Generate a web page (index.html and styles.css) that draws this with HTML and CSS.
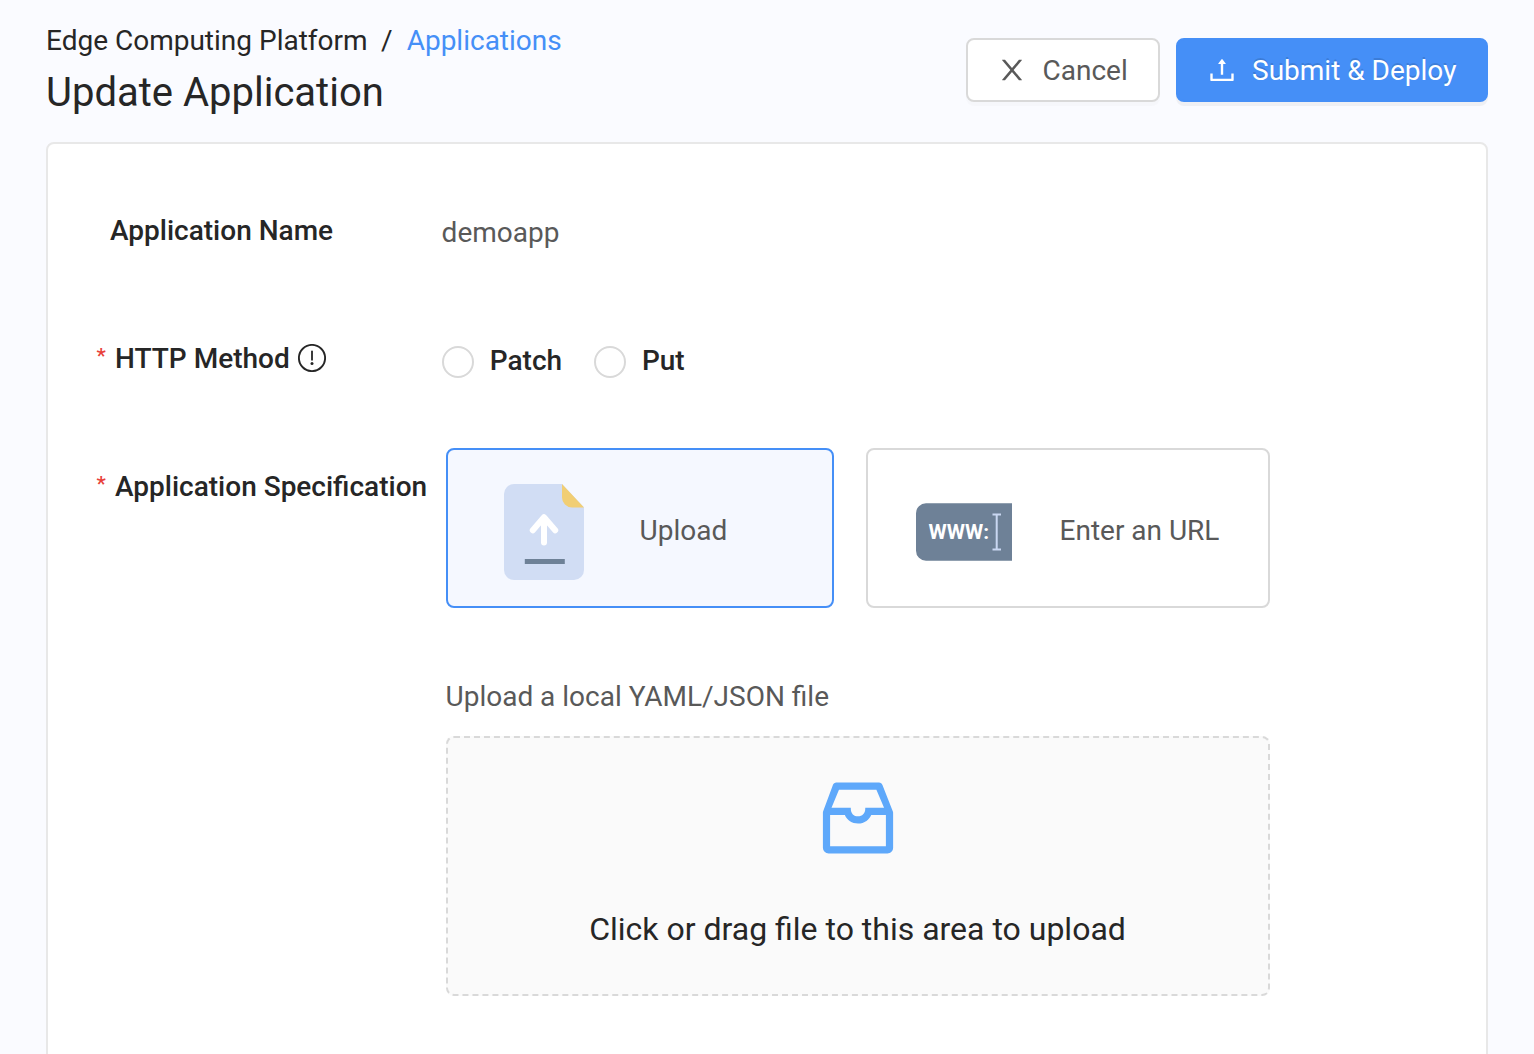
FILE: index.html
```html
<!DOCTYPE html>
<html lang="en">
<head>
<meta charset="utf-8">
<title>Update Application</title>
<link rel="stylesheet" href="styles.css">
</head>
<body>
<header class="header">
  <div class="heading">
    <nav class="breadcrumb"><span>Edge Computing Platform</span><span class="slash">/</span><a class="crumb-link">Applications</a></nav>
    <h1 class="title">Update Application</h1>
  </div>
  <div class="actions">
    <button class="btn btn-cancel"><svg class="btn-icon" viewBox="0 0 1024 1024"><path d="M563.8 512l262.5-312.9c4.4-5.2.7-13.1-6.1-13.1h-79.8c-4.7 0-9.2 2.1-12.3 5.7L511.6 449.8 295.1 191.7c-3-3.6-7.5-5.7-12.3-5.7H203c-6.8 0-10.5 7.9-6.1 13.1L459.4 512 196.9 824.9A7.95 7.95 0 0 0 203 838h79.8c4.7 0 9.2-2.1 12.3-5.7l216.5-258.1 216.5 258.1c3 3.6 7.5 5.7 12.3 5.7h79.8c6.8 0 10.5-7.9 6.1-13.1L563.8 512z"/></svg><span>Cancel</span></button>
    <button class="btn btn-primary"><svg class="btn-icon" viewBox="0 0 1024 1024"><path d="M400 317.7h73.9V656c0 4.4 3.6 8 8 8h60c4.4 0 8-3.6 8-8V317.7H624c6.7 0 10.4-7.7 6.3-12.9L518.3 163a8 8 0 0 0-12.6 0l-112 141.7c-4.1 5.3-.4 13 6.3 13zM878 626h-60c-4.4 0-8 3.6-8 8v154H214V634c0-4.4-3.6-8-8-8h-60c-4.4 0-8 3.6-8 8v198c0 17.7 14.3 32 32 32h684c17.7 0 32-14.3 32-32V634c0-4.4-3.6-8-8-8z"/></svg><span>Submit &amp; Deploy</span></button>
  </div>
</header>
<main class="card">
  <div class="row">
    <div class="label label-plain">Application Name</div>
    <div class="value">demoapp</div>
  </div>
  <div class="row">
    <div class="label"><span class="required">*</span>HTTP Method
      <svg class="info" viewBox="0 0 28 28"><circle cx="14" cy="14" r="13.1" fill="none" stroke="currentColor" stroke-width="1.9"/><rect x="13.1" y="6.7" width="1.8" height="9.8"/><circle cx="14" cy="19.4" r="1.5"/></svg>
    </div>
    <div class="radios">
      <label class="radio"><span class="dot"></span>Patch</label>
      <label class="radio"><span class="dot"></span>Put</label>
    </div>
  </div>
  <div class="row row-spec">
    <div class="label"><span class="required">*</span>Application Specification</div>
    <div class="spec">
      <div class="choices">
        <div class="choice choice-upload">
          <svg class="file-icon" viewBox="0 0 80 96">
            <path fill="#d1ddf4" d="M10 0H58L80 23.5V86a10 10 0 0 1-10 10H10A10 10 0 0 1 0 86V10A10 10 0 0 1 10 0z"/>
            <path fill="#f1ce74" d="M58 0L80 23.5H68a10 10 0 0 1-10-10z"/>
            <path fill="none" stroke="#fff" stroke-width="6" stroke-linecap="round" stroke-linejoin="round" d="M40 58.5V33.5M28.8 46.3L40 33.3L51.2 46.3"/>
            <path fill="#6e8197" d="M20.8 75h40v5h-40z"/>
          </svg>
          <span>Upload</span>
        </div>
        <div class="choice choice-url">
          <svg class="url-icon" viewBox="0 0 96 58">
            <path fill="#6e8197" d="M10 .2H96V57.8H10A10 10 0 0 1 0 47.8V10.2A10 10 0 0 1 10 .2z"/>
            <text x="12.5" y="35.8" class="url-text" textLength="60.5" lengthAdjust="spacingAndGlyphs">WWW:</text>
            <path fill="none" stroke="#c9d7f1" stroke-width="2" d="M76.5 11.5h8.5M80.7 11.5v35M76.5 46.5h8.5"/>
          </svg>
          <span>Enter an URL</span>
        </div>
      </div>
      <p class="hint">Upload a local YAML/JSON file</p>
      <div class="dropzone">
        <svg class="inbox" viewBox="0 0 1024 1024"><path d="M885.2 446.3l-.2-.8-112.2-285.1c-5-16.1-19.9-27.2-36.8-27.2H281.2c-17 0-32.1 11.3-36.9 27.6L139.4 443l-.3.7-.2.8c-1.3 4.9-1.7 9.9-1 14.8-.1 1.6-.2 3.2-.2 4.8V830a60.9 60.9 0 0 0 60.8 60.8h627.2c33.5 0 60.8-27.3 60.9-60.8V464.1c0-1.3 0-2.6-.1-3.7.4-4.9 0-9.6-1.3-14.1zm-295.8-43l-.3 15.7c-.8 44.9-31.8 75.1-77.1 75.1-22.1 0-41.1-7.1-54.8-20.6S436 441.2 435.6 419l-.3-15.7H229.5L309 210h399.2l81.7 193.3H589.4zm-375 76.8h157.3c24.3 57.1 76 90.8 140.4 90.8 33.7 0 65-9.4 90.3-27.2 22.2-15.6 39.5-37.4 50.7-63.6h156.5V814H214.4V480.1z"/></svg>
        <p class="drop-text">Click or drag file to this area to upload</p>
      </div>
    </div>
  </div>
</main>
</body>
</html>
```
FILE: styles.css
```css
* { box-sizing: border-box; }
html { height: 100%; overflow: hidden; }
body {
  margin: 0;
  height: 1054px;
  overflow: hidden;
  padding: 0 46px;
  background: #fafbff;
  color: #262626;
  font: 400 28px/44px Roboto, sans-serif;
}
svg { display: block; flex: none; fill: currentColor; }
p, h1 { margin: 0; }
.header { display: flex; justify-content: space-between; height: 142px; padding-top: 19px; }
.breadcrumb { display: flex; }
.slash { margin: 0 14px 0 13.5px; }
.crumb-link { color: #458ff7; }
.title { margin-top: 6px; font-size: 40px; font-weight: 400; line-height: 48px; }
.actions { display: flex; gap: 16px; padding-top: 19px; }
.btn {
  display: flex;
  align-items: center;
  height: 64px;
  padding: 0 28px;
  gap: 14px;
  border: 2px solid #d9d9d9;
  border-radius: 8px;
  font: inherit;
  white-space: nowrap;
}
.btn span { padding-top: 2px; }
.btn-icon { width: 32px; height: 32px; }
.btn-cancel { width: 194px; gap: 14.5px; background: #fff; color: #595959; box-shadow: 0 4px 0 rgba(0, 0, 0, .016); }
.btn-primary {
  width: 312px;
  border-color: #458ff7;
  background: #458ff7;
  color: #fff;
  text-shadow: 0 -2px 0 rgba(0, 0, 0, .12);
  box-shadow: 0 4px 0 rgba(0, 0, 0, .043);
}
.card {
  height: 960px;
  padding: 64px 48px 0;
  border: 2px solid #e8e8e8;
  border-radius: 8px;
  background: #fff;
}
.row { display: flex; height: 128px; }
.label { display: flex; width: 346px; padding-top: 1px; font-weight: 500; white-space: nowrap; }
.label-plain { padding-left: 14px; }
.required { width: 19px; padding-left: .6px; color: #e8403a; font-size: 21px; font-weight: 500; line-height: 38px; }
.info { width: 28px; height: 28px; margin: 7px 0 0 8px; }
.value { margin-left: -.4px; padding-top: 3px; color: #595959; }
.radios { display: flex; gap: 32px; padding-top: 3px; font-weight: 500; }
.radio { display: flex; gap: 15.8px; }
.dot { width: 32px; height: 32px; margin-top: 7px; border: 2px solid #d9d9d9; border-radius: 50%; }
.row-spec { height: auto; }
.spec { width: 824px; margin-left: 4px; margin-top: -16px; color: #595959; }
.choices { display: flex; gap: 32px; }
.choice { display: flex; align-items: center; height: 160px; border: 2px solid #d9d9d9; border-radius: 8px; }
.choice-upload { width: 388px; padding: 6px 0 0 56px; gap: 55.5px; border-color: #458ff7; background: #f5f8ff; }
.choice-url { width: 404px; padding: 6px 0 0 48px; gap: 47.5px; }
.choice span { margin-top: -1px; }
.file-icon { width: 80px; height: 96px; margin-top: 2px; }
.url-icon { width: 96px; height: 58px; margin-top: 2px; }
.url-text { fill: #fff; font: 700 20px Roboto, sans-serif; }
.hint { margin-top: 67px; margin-left: -.5px; }
.dropzone {
  display: flex;
  flex-direction: column;
  align-items: center;
  height: 260px;
  margin-top: 17px;
  padding-top: 32px;
  border: 2px dashed #d9d9d9;
  border-radius: 8px;
  background: #fafafa;
}
.inbox { width: 96px; height: 96px; color: #5ea8fa; }
.drop-text { margin-top: 39px; padding-right: 1px; color: #262626; font-size: 32px; line-height: 48px; }
```
